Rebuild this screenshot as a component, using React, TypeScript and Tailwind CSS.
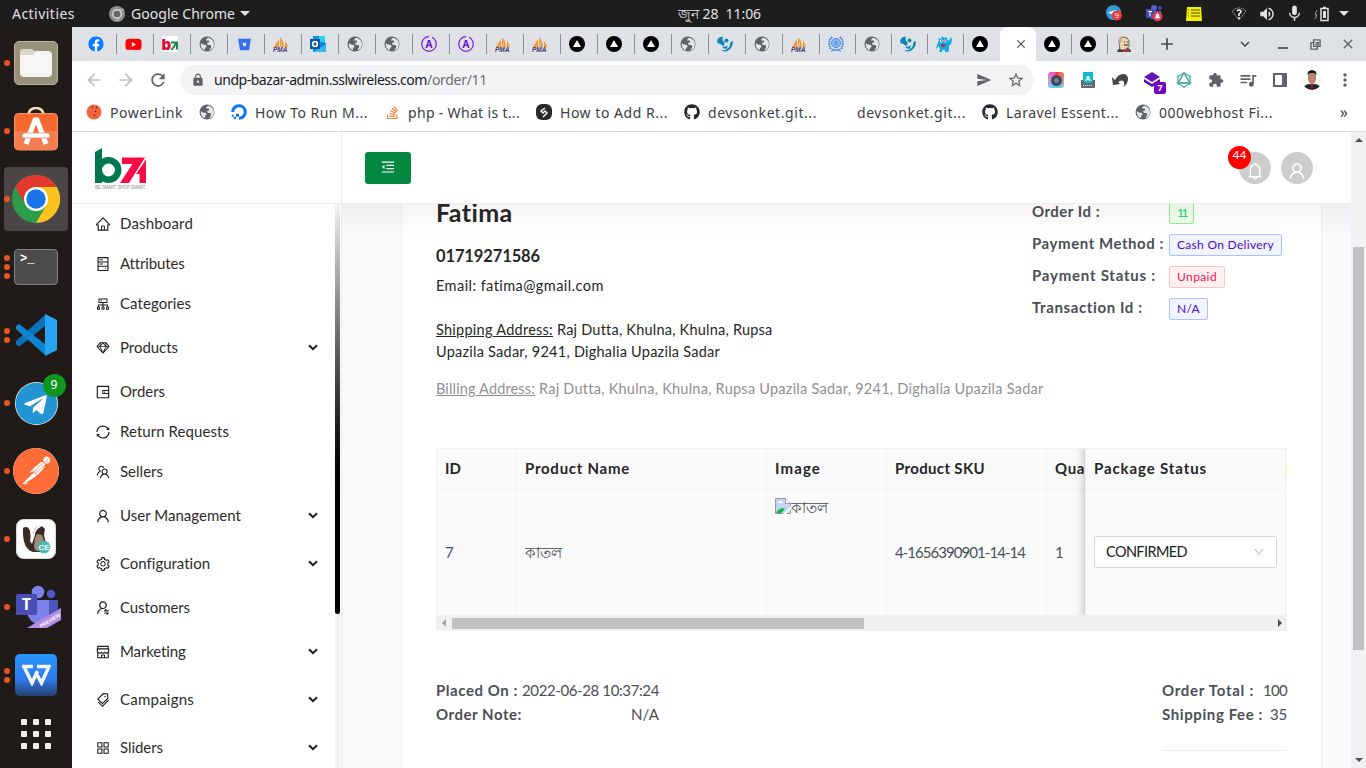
import { useLayoutEffect, useRef, useState, type ReactNode } from "react";
import {
  AiOutlineHome, AiOutlineHdd, AiOutlineCluster, AiOutlineSketch, AiOutlineWallet, AiOutlineSync, AiOutlineTeam,
  AiOutlineUser, AiOutlineSetting, AiOutlineUserSwitch, AiOutlineShop, AiOutlineTags, AiOutlineAppstore,
  AiOutlineMenuFold, AiOutlineBell, AiOutlineDown,
} from "react-icons/ai";
import { FaFacebook, FaYoutube, FaBitbucket, FaDigitalOcean, FaStackOverflow, FaGithub, FaTelegram } from "react-icons/fa";
import {
  MdArrowBack, MdArrowForward, MdRefresh, MdLock, MdSend, MdStarBorder, MdExtension, MdQueueMusic,
  MdMoreVert, MdClose, MdAdd, MdKeyboardArrowDown, MdVolumeUp, MdMic,
} from "react-icons/md";
import { SiPostman } from "react-icons/si";

/** Single-line text that spreads its letters over a given width. */
function Fit({ w, className = "", children }: { w: number; className?: string; children: string }) {
  const ref = useRef<HTMLSpanElement>(null);
  const [spacing, setSpacing] = useState(0);
  useLayoutEffect(() => {
    const el = ref.current;
    if (el) setSpacing((w - el.getBoundingClientRect().width) / children.length);
  }, [w, children]);
  return (
    <span ref={ref} className={`inline-block whitespace-pre ${className}`} style={{ letterSpacing: spacing }}>
      {children}
    </span>
  );
}

function Globe() {
  return (
    <svg viewBox="0 0 16 16" className="size-4">
      <circle cx="8" cy="8" r="7.500" fill="#5f6368" />
      <path d="M9.500 1.800q-2.500.7-2.500 2.700h3v2H8.500q-1 2 1 2.500l2.500.3v2.200l-2 2.700q5-1 5-6.200-.3-4-4.500-6z" fill="#e4e6ea" />
      <path d="M1.800 7 4 8.500l3 .5.500 2-1.500 1v2.300Q1.500 13 1.800 7z" fill="#e4e6ea" />
    </svg>
  );
}

function Pma() {
  return (
    <svg viewBox="0 0 16 16" className="size-4">
      <path d="M1 11 6 3v8zM7 11V1q4 4 4 10zM12 11V5q3 3 3 6z" fill="#f59a33" />
      <path d="M8 11V1l1 10z" fill="#c9c9c9" />
      <text x="0" y="16" fontSize="6.5" fontWeight="bold" fontStyle="italic" fill="#41386f" fontFamily="Liberation Sans">PMA</text>
    </svg>
  );
}

function Triangle() {
  return (
    <svg viewBox="0 0 16 16" className="size-4">
      <circle cx="8" cy="8" r="8" />
      <path d="m8 4 4 7H4z" fill="#fff" />
    </svg>
  );
}

function CircleA() {
  return (
    <svg viewBox="0 0 16 16" className="size-4">
      <circle cx="8" cy="8" r="7.3" fill="none" stroke="#7a1fd0" strokeWidth="1.2" strokeDasharray="40 3" transform="rotate(-45 8 8)" />
      <text x="8" y="11.7" textAnchor="middle" fontSize="10" fontWeight="bold" fill="#6a12c8" fontFamily="Inter">A</text>
    </svg>
  );
}

function Swirl() {
  return (
    <svg viewBox="0 0 16 16" className="size-4">
      <path d="M6 .5C1 1-.5 4 .5 7q3 .5 5.500 3 2-1 1.500-3.500Q4.500 4 6 .5z" fill="#0b87b8" />
      <circle cx="9.500" cy="4.500" r="2" fill="#0b87b8" />
      <path d="M15.800 5q.5 7-5.300 10-3 1.200-6.500-.5 9 .5 9.500-8.500z" fill="#0b87b8" />
      <path d="M6 10.500q3 .5 5-1l-1.500 3.500-4-1z" fill="#0b87b8" />
    </svg>
  );
}

function Outlook() {
  return (
    <svg viewBox="0 0 16 16" className="size-4">
      <path d="M3 0h12v8H3z" fill="#1490df" />
      <path d="M9 0h6v6H9z" fill="#28d0f5" />
      <path d="M3 7h13v9H3z" fill="#1380d2" />
      <path d="m3 16 13-8v8z" fill="#35b8f1" />
      <path d="M0 3h10v10H0z" fill="#0a57a4" />
      <circle cx="5" cy="8" r="2.4" fill="none" stroke="#fff" strokeWidth="1.6" />
    </svg>
  );
}

function B71Small() {
  return (
    <svg viewBox="0 0 16 16" className="size-4">
      <path d="M0 0h16v16H0z" fill="#fff" />
      <text x="-.5" y="13.5" fontSize="15" fontWeight="900" fill="#dd0f35" fontFamily="Inter">b</text>
      <path d="M9 6.5h6v7M14.5 7l-5 7" fill="none" stroke="#0b8a43" strokeWidth="2" />
    </svg>
  );
}

function Un() {
  return (
    <svg viewBox="0 0 16 16" className="size-4" fill="none" stroke="#4a8fe0">
      <path d="M4 1Q-1 6 3 13M12 1q5 5 1 12" strokeWidth="2" strokeDasharray="1.800 .5" />
      <circle cx="8" cy="7" r="4.500" fill="#a5c9f3" />
      <path d="M8 2.500v9M3.500 7h9M5 4.500q3 3 6 0M5 9.500q3-3 6 0" strokeWidth=".8" />
      <path d="m3 15 9-2M13 15l-9-2" />
    </svg>
  );
}

function Monster() {
  return (
    <svg viewBox="0 0 16 16" className="size-4">
      <path d="M3 4 2 2l3 1 1-3 2 2 3-1v2l2 2 2-4 1 3-1 4-2 2v4l-1 2h-3v-2H6v2H3l1-3-1-3-3 3 1-4z" fill="#12a7df" />
      <circle cx="5.5" cy="5" r="1.5" fill="#fff" />
      <circle cx="9" cy="5" r="1.5" fill="#fff" />
      <circle cx="6" cy="5" r=".7" />
      <circle cx="9" cy="5" r=".7" />
      <path d="M5 8h5q-1 3-3 3t-2-3" fill="#c1272d" />
    </svg>
  );
}

function Jenkins() {
  return (
    <svg viewBox="0 0 16 16" className="size-4">
      <path d="M1 16q1-4 5-4h6q3 1 3 4z" fill="#3d424c" />
      <path d="M4 14 3 5q1-4 5-4 4 0 5 4v5q-2 4-5 4z" fill="#efd2ae" stroke="#3b2c25" strokeWidth=".7" />
      <path d="M3 9 2 5Q3 0 8 0 5 2 5 6z" fill="#b8aa98" />
      <path d="M8 6h1M11 6h1M8 9h4" stroke="#222" strokeWidth="1" />
      <path d="m7 13 3 1 3-1v3l-3-1-3 1z" fill="#d33833" />
    </svg>
  );
}

const favicons: Record<string, ReactNode> = {
  fb: <FaFacebook className="size-4 shrink-0 rounded-full bg-white text-[#0a7cff]" />,
  yt: <FaYoutube className="size-[17px] shrink-0 text-[#f00]" />,
  b71: <B71Small />,
  g: <Globe />,
  bit: <FaBitbucket className="size-[13px] text-[#2f6ff2]" />,
  pma: <Pma />,
  out: <Outlook />,
  a: <CircleA />,
  tri: <Triangle />,
  sw: <Swirl />,
  un: <Un />,
  mon: <Monster />,
  jen: <Jenkins />,
};

const wideTabs = ["fb", "yt", "b71", "g", "bit", "pma", "out", "g", "g", "a", "a", "pma", "pma", "tri", "tri", "tri", "g", "sw", "g", "pma"];
const narrowTabs = ["un", "g", "sw", "mon"];
const lastTabs = ["tri", "tri", "jen"];

function Tab({ icon, narrow = false }: { icon: string; narrow?: boolean }) {
  return (
    <div className={`flex h-[34px] shrink-0 items-center ${narrow ? "w-9" : "w-[37px]"}`}>
      <span className="ml-2 flex w-4 items-center justify-center">{favicons[icon]}</span>
      <span className="ml-auto h-5 w-px bg-[#8b8e93]" />
    </div>
  );
}

function TopBar() {
  return (
    <div className="flex h-[27px] w-full items-center bg-[#1d1d1d] text-[14px] text-[#e2e2e2]">
      <Fit w={63} className="ml-3">Activities</Fit>
      <svg viewBox="0 0 16 16" className="ml-[34px] size-4">
        <circle cx="8" cy="8" r="8" fill="#8d8d8d" />
        <circle cx="8" cy="8" r="4.2" fill="#666" stroke="#ddd" strokeWidth="1.4" />
        <path d="M8 4h7M11.5 10 8 15" stroke="#ccc" />
      </svg>
      <Fit w={104} className="ml-[6px]">Google Chrome</Fit>
      <span className="ml-[5px] border-x-[5px] border-t-[5px] border-x-transparent border-t-[#e2e2e2]" />
      <Fit w={83} className="ml-[428px]">জুন 28  11:06</Fit>
      <svg viewBox="0 0 18 18" className="ml-[345px] size-[17px]">
        <circle cx="8" cy="8" r="8" fill="#2f9bd8" />
        <path d="m2 8 9-3-2 6z" fill="#fff" />
        <circle cx="11.5" cy="11" r="5.3" fill="#ef3a3a" />
        <text x="11.5" y="14" textAnchor="middle" fontSize="8" fill="#fff" fontFamily="Open Sans">9</text>
      </svg>
      <svg viewBox="0 0 18 17" className="ml-[22px] h-[17px] w-[18px]">
        <circle cx="9" cy="3" r="3" fill="#5b60cc" />
        <circle cx="15" cy="3" r="2" fill="#4047a0" />
        <path d="M6 6h10v8H6z" fill="#5b60cc" />
        <path d="M1 4h8v9H1z" fill="#434bb0" />
        <path d="M3 6.500h4M5 6.500v5" stroke="#fff" />
        <circle cx="12.500" cy="11.500" r="5" fill="#dd3b55" />
        <path d="M10 13h5l-1-1v-2q-1.500-3-3 0v2zM12 14h1" fill="#fff" stroke="#fff" strokeWidth=".5" />
      </svg>
      <svg viewBox="0 0 16 14" className="ml-[23px] h-[14px] w-4">
        <path d="M1 0h14l1 14H0z" fill="#f6ed00" />
        <path d="M2 3h1M2 6h1M2 9h1M5 3h9M5 6h9M5 9h9" stroke="#514d00" />
      </svg>
      <svg viewBox="0 0 16 14" className="ml-[29px] h-[14px] w-4" fill="none" stroke="#a8a8a8">
        <path d="M8 13 1 4q7-6 14 0z" strokeDasharray="1.500 .6" />
        <path d="M6 4q2-2 4 0 0 2-2 3v2M8 10v2" stroke="#f5f5f5" strokeWidth="1.600" />
      </svg>
      <MdVolumeUp className="ml-[11px] size-[18px]" />
      <MdMic className="ml-[9px] size-[19px]" />
      <svg viewBox="0 0 16 16" className="ml-[9px] size-4" fill="none" stroke="#e2e2e2">
        <path d="M8 2.500h7v12H8zM10 1.500h3" strokeWidth="1.500" />
        <path d="M10 5h3v7h-3z" fill="#e2e2e2" stroke="none" />
        <path d="M4 4 2 9h2l-2 4" stroke="#999" />
      </svg>
      <span className="ml-[10px] border-x-[5px] border-t-[5px] border-x-transparent border-t-[#e2e2e2]" />
    </div>
  );
}

function ChromeLogo() {
  return (
    <svg viewBox="0 0 48 48" className="size-12">
      <circle cx="24" cy="24" r="24" fill="#2c9c4b" />
      <path d="M24 12h20.800A24 24 0 0 1 24 48l10.400-18z" fill="#fcc31e" />
      <path d="M3.200 12a24 24 0 0 1 41.600 0H24L13.600 30z" fill="#e23a2e" />
      <circle cx="24" cy="24" r="12" fill="#fff" />
      <circle cx="24" cy="24" r="9.700" fill="#1b73e8" />
    </svg>
  );
}

function DockItem({ dots, active = false, children }: { dots: number; active?: boolean; children: ReactNode }) {
  return (
    <div className="flex h-[68px] w-full shrink-0 items-center">
      <div className="relative z-10 flex w-1 flex-col items-center gap-[3px]">
        {Array.from({ length: dots }, (_, i) => (
          <span key={i} className="ml-[10px] size-[6px] rounded-full bg-[#e95420]" />
        ))}
      </div>
      <div className={`flex size-16 items-center justify-center rounded ${active ? "bg-[#4b4645]" : ""}`}>{children}</div>
    </div>
  );
}

function Dock() {
  return (
    <div className="flex h-full w-[72px] shrink-0 flex-col overflow-hidden bg-[#201b18] pt-[2px]">
      <DockItem dots={1}>
        <div className="flex size-11 items-center justify-center rounded-[5px] border border-[#b9b4a3] bg-[#989079]">
          <svg viewBox="0 0 34 30" className="h-[30px] w-[34px]">
            <path d="M1 4q0-3 3-3h9l4 3h12q4 0 4 4H1z" fill="#d9d5ca" />
            <path d="M1 7h13l3-4h12q4 0 4 4v18q0 4-4 4H5q-4 0-4-4z" fill="#f7f6f5" />
          </svg>
        </div>
      </DockItem>
      <DockItem dots={1}>
        <svg viewBox="0 0 44 44" className="mb-1 size-11">
          <path d="M14 9q1-8 8-8t8 8" fill="none" stroke="#efdfb3" strokeWidth="2.500" />
          <rect x=".5" y="6.500" width="43" height="36.500" rx="4" fill="#f4682f" stroke="#f89872" />
          <path d="M1 24h42v15q0 4-4 4H5q-4 0-4-4z" fill="#f57e50" />
          <path d="M12 37 21 13h2l9 24" fill="none" stroke="#fff" strokeWidth="5" />
          <rect x="8" y="26" width="28" height="5" rx="2" fill="#fff" stroke="#d97855" strokeWidth=".6" />
        </svg>
      </DockItem>
      <DockItem dots={1} active><ChromeLogo /></DockItem>
      <DockItem dots={3}>
        <div className="h-9 w-11 rounded-[4px] border border-[#808080] bg-[#4c4c4c] px-[5px] pt-[2px] font-[Liberation_Mono] text-[12px] font-bold leading-[14px] text-white">
          <span>&gt;_</span>
        </div>
      </DockItem>
      <DockItem dots={2}>
        <svg viewBox="0 0 42 42" className="size-[42px]">
          <path d="M1 27 30 1v11L5 32q-2 1-4-2z" fill="#0b72ba" />
          <path d="M1 15q-1-3 3-5l26 20v11L1 15z" fill="#0f85d4" />
          <path d="M30 0 42 6v30l-12 6z" fill="#26a5f3" />
        </svg>
      </DockItem>
      <DockItem dots={1}>
        <div className="relative flex size-[43px] items-center justify-center">
          <FaTelegram className="size-[43px] rounded-full bg-white text-[#2295d2]" />
          <span className="absolute -right-2 -top-2 flex size-[23px] items-center justify-center rounded-full bg-[#0e9621] text-[12px] text-white">9</span>
        </div>
      </DockItem>
      <DockItem dots={1}>
        <div className="size-[46px] overflow-hidden rounded-full bg-white">
          <SiPostman className="size-[46px] text-[#ff6c37]" />
        </div>
      </DockItem>
      <DockItem dots={1}>
        <svg viewBox="0 0 40 40" className="size-10">
          <rect x=".5" y=".5" width="39" height="39" rx="7" fill="#fff" stroke="#d8d8d8" />
          <path d="M7 9q5-3 7 3 1 6 0 10l2 3 3-9q0-4 4-7l3-2 3 3-1 6 2 9-4 8H17Q6 30 7 9z" fill="#3c2a23" />
          <path d="m19 19 2-4 5 1 3 9-3 7h-6l-2-4z" fill="#a08a78" />
          <path d="m17 14 4-7" stroke="#cfc6bd" />
          <circle cx="28" cy="28" r="6.300" fill="#4bb6b8" />
          <text x="28" y="31" textAnchor="middle" fontSize="8" fontWeight="bold" fill="#e9ffff" fontFamily="Liberation Sans">CE</text>
        </svg>
      </DockItem>
      <DockItem dots={1}>
        <svg viewBox="0 0 46 44" className="ml-[3px] h-11 w-[46px]">
          <circle cx="23" cy="7" r="6.300" fill="#7b83eb" />
          <circle cx="36" cy="9" r="4.200" fill="#5059c9" />
          <path d="M34 15h9v16q-2 5-9 5z" fill="#4b53bc" />
          <path d="M12 15h22v18q-3 6-10 6t-11-8z" fill="#7b83eb" />
          <rect x="1" y="9" width="21" height="21" rx="1.500" fill="#484eb4" />
          <text x="11.500" y="25" textAnchor="middle" fontSize="16" fontWeight="bold" fill="#fff" fontFamily="Open Sans">T</text>
          <path d="m12 43 34-20v12l-14 8z" fill="#b58ee3" />
          <text x="26" y="43" fontSize="5" fontWeight="bold" fill="#fff" fontFamily="Liberation Sans" transform="rotate(-31 26 43)">PREVIEW</text>
        </svg>
      </DockItem>
      <DockItem dots={2}>
        <div className="flex size-[42px] items-center justify-center rounded-[5px] bg-linear-to-b from-[#2795ff] via-[#2d79ee] via-60% to-[#243f70]">
          <svg viewBox="0 0 30 22" className="h-[22px] w-[30px]" fill="none" stroke="#f4f4f4" strokeWidth="3.500">
            <path d="M1 2.500h11M16 2.500h12L20.500 19 15 9M3 2.500 11 19l5.500-12" />
          </svg>
        </div>
      </DockItem>
      <div className="ml-[21px] mt-[10px] grid w-[30px] grid-cols-3 gap-[6px]">
        {Array.from({ length: 9 }, (_, i) => <span key={i} className="size-[6px] rounded-[1px] bg-[#f1f0ee]" />)}
      </div>
    </div>
  );
}

function TabStrip() {
  return (
    <div className="flex h-[34px] w-full bg-[#dee1e6] pl-2">
      {wideTabs.map((t, i) => <Tab key={i} icon={t} />)}
      {narrowTabs.map((t, i) => <Tab key={i} icon={t} narrow />)}
      <div className="flex w-9 items-center pl-2"><Triangle /></div>
      <div className="flex w-9 items-center justify-center rounded-t-lg bg-white pl-[6px]"><MdClose className="size-[14px] text-[#45494d]" /></div>
      {lastTabs.map((t, i) => <Tab key={i} icon={t} narrow />)}
      <div className="flex items-center text-[#45494d]">
        <MdAdd className="ml-[13px] size-[20px]" />
        <MdKeyboardArrowDown className="ml-[59px] size-[18px]" />
        <span className="ml-6 mt-2 h-[2px] w-[10px] bg-[#5f6368]" />
        <svg viewBox="0 0 12 12" className="ml-[22px] size-[11px]" fill="none" stroke="#5f6368" strokeWidth="1.500">
          <path d="M4 1h7v7H4zM4 4H1v7h7V8M6 4h3v2H6" />
        </svg>
        <MdClose className="ml-[19px] size-4 text-[#5f6368]" />
      </div>
    </div>
  );
}

function Toolbar() {
  return (
    <div className="flex h-[38px] w-full items-center bg-white text-[#5f6368]">
      <MdArrowBack className="ml-3 size-5 text-[#bdc0c3]" />
      <MdArrowForward className="ml-3 size-5 text-[#bdc0c3]" />
      <MdRefresh className="ml-3 size-5" />
      <div className="ml-3 flex h-[30px] w-[854px] items-center rounded-full bg-[#f1f3f4] text-[14px]">
        <MdLock className="ml-[11px] size-[14px]" />
        <Fit w={213} className="ml-[9px] pb-px text-[#202124]">undp-bazar-admin.sslwireless.com</Fit>
        <Fit w={60} className="pb-px text-[#6b6f73]">/order/11</Fit>
        <MdSend className="ml-auto size-4" />
        <MdStarBorder className="ml-[15px] mr-[9px] size-[18px]" />
      </div>
      <div className="ml-[14px] flex size-4 items-center justify-center rounded-[3px] bg-conic from-[#ff2d20] via-[#16d7ff] to-[#ff2db5]">
        <span className="size-[11px] rounded-full border-[3px] border-[#3d4654] bg-[#698292]" />
      </div>
      <svg viewBox="0 0 16 16" className="ml-4 size-4">
        <path d="M1 8h14v7q0 1-1 1H2q-1 0-1-1z" fill="#666b6e" />
        <path d="M3 0h10v9l-2 2H5L3 9z" fill="#11bcd0" />
        <text x="8" y="8.500" textAnchor="middle" fontSize="8" fontWeight="bold" fill="#fff" fontFamily="Liberation Sans">A</text>
        <path d="M3 13.500h10" stroke="#eee" strokeDasharray="1 1" />
      </svg>
      <svg viewBox="0 0 16 16" className="ml-4 size-4">
        <path d="m0 5 1 8 7-1-2-2q4-3 6 0 1 3-1 5 5-3 5-8 0-5-5-5-5 0-8 6z" fill="#474747" />
      </svg>
      <div className="relative ml-4 size-4">
        <svg viewBox="0 0 16 16" className="size-4"><path d="m8 0 8 5-8 5-8-5z" fill="#6a14bd" /><path d="m0 7 8 5 8-5v3l-8 5-8-5z" fill="#5b0fae" /></svg>
        <span className="absolute left-[10px] top-[10px] flex size-3 items-center justify-center rounded-[2px] bg-[#7606bd] text-[9px] font-bold text-white">7</span>
      </div>
      <svg viewBox="0 0 16 16" className="ml-4 size-4" fill="none">
        <path d="m8 1 6 3.500v7L8 15l-6-3.500v-7z" stroke="#43b9a2" strokeWidth="1.300" />
        <path d="m8 1 6 10H2z" stroke="#2b87c9" strokeWidth="1.300" />
        <path d="M8 0v2M1 4.500h2M13 4.500h2M1 11.500h2M13 11.500h2M8 14v2" stroke="#59cf55" strokeWidth="2" />
      </svg>
      <MdExtension className="ml-4 size-4" />
      <MdQueueMusic className="ml-[14px] size-[20px]" />
      <svg viewBox="0 0 14 14" className="ml-[15px] size-[14px]"><path d="M1 1h12v12H1z" fill="none" stroke="#5f6368" strokeWidth="2" /><path d="M9 1h4v12H9z" fill="#5f6368" /></svg>
      <svg viewBox="0 0 20 20" className="ml-[15px] size-5 rounded-full">
        <path d="M0 0h20v20H0z" fill="#f3f8fa" />
        <path d="M1 20q0-5 6-6h6q6 1 6 6z" fill="#26222c" />
        <path d="m8 14 2 6 2-6z" fill="#981c3b" />
        <path d="M6 5q0-4 4-4t4 4v4q-1 5-4 5T6 9z" fill="#b9846e" />
        <path d="M5.500 5q0-5 4.500-5t4.500 5l-2-2h-5z" fill="#171313" />
      </svg>
      <MdMoreVert className="ml-[13px] size-5" />
    </div>
  );
}

function Mark({ w, gap, icon, children }: { w: number; gap: string; icon?: ReactNode; children?: string }) {
  return (
    <div className={`flex shrink-0 items-center ${gap}`}>
      <span className="flex w-4 items-center justify-center">{icon}</span>
      {children && <Fit w={w} className="ml-2">{children}</Fit>}
    </div>
  );
}

function Bookmarks() {
  return (
    <div className="flex h-[33px] w-full items-center border-b border-[#dadce0] bg-white pb-[6px] text-[14px] text-[#3c4043]">
      <Mark w={73} gap="ml-[14px]" icon={<svg viewBox="0 0 16 16" className="size-4"><circle cx="8" cy="8" r="7.500" fill="#f2653a" /><path d="m6 3 1 1m3-1 1 1M9 7l1 1m-1 3-1 1" stroke="#4a2030" strokeWidth="1.200" /></svg>}>PowerLink</Mark>
      <Mark w={0} gap="ml-4" icon={<Globe />} />
      <Mark w={113} gap="ml-4" icon={<FaDigitalOcean className="size-4 shrink-0 text-[#0972ff]" />}>How To Run M...</Mark>
      <Mark w={112} gap="ml-4" icon={<FaStackOverflow className="size-[15px] text-[#f08032]" />}>php - What is t...</Mark>
      <Mark w={108} gap="ml-4" icon={<svg viewBox="0 0 16 16" className="size-4"><rect width="16" height="16" rx="6" fill="#2b2b2b" /><path d="m9 4-4 3 2 2 2-2 2 2-4 4" fill="none" stroke="#fff" strokeWidth="1.400" /></svg>}>How to Add R...</Mark>
      <Mark w={109} gap="ml-4" icon={<FaGithub className="size-4 text-[#24292f]" />}>devsonket.git...</Mark>
      <Mark w={109} gap="ml-4">devsonket.git...</Mark>
      <Mark w={113} gap="ml-4" icon={<FaGithub className="size-4 text-[#24292f]" />}>Laravel Essent...</Mark>
      <Mark w={114} gap="ml-4" icon={<Globe />}>000webhost Fi...</Mark>
      <span className="ml-auto mr-[18px] text-[16px]">»</span>
    </div>
  );
}

const menu: [string, number, typeof AiOutlineHome, boolean][] = [
  ["Dashboard", 73, AiOutlineHome, false],
  ["Attributes", 64, AiOutlineHdd, false],
  ["Categories", 71, AiOutlineCluster, false],
  ["Products", 58, AiOutlineSketch, true],
  ["Orders", 45, AiOutlineWallet, false],
  ["Return Requests", 109, AiOutlineSync, false],
  ["Sellers", 43, AiOutlineTeam, false],
  ["User Management", 121, AiOutlineUser, true],
  ["Configuration", 90, AiOutlineSetting, true],
  ["Customers", 70, AiOutlineUserSwitch, false],
  ["Marketing", 66, AiOutlineShop, true],
  ["Campaigns", 74, AiOutlineTags, true],
  ["Sliders", 43, AiOutlineAppstore, true],
];

function Sidebar() {
  return (
    <div className="flex h-full w-[270px] shrink-0 flex-col overflow-hidden border-r border-[#ececee] bg-white">
      <div className="flex h-[72px] shrink-0 items-start border-b border-[#ededed] pl-[23px] pt-[16px]">
        <svg viewBox="0 0 52 41" className="h-[41px] w-[52px]">
          <circle cx="13.500" cy="22" r="9.700" fill="none" stroke="#00784f" strokeWidth="6.500" />
          <path d="M0 4 7 0v35H0z" fill="#00784f" />
          <path d="M27 9.500h23L34 35h-9l12.500-19H27z" fill="#fb0a43" />
          <path d="M51 11.500V35h-6.500V26H41z" fill="#fb0a43" />
          <text x="0" y="40.500" fontSize="4.500" textLength="51" fill="#8d8d8d" fontFamily="Liberation Sans">BE SMART. SHOP SMART.</text>
        </svg>
      </div>
      <div className="flex min-h-0 flex-1">
        <div className="-mt-px flex flex-1 flex-col overflow-hidden">
          {menu.map(([label, w, Icon, sub]) => (
            <div key={label} className={`flex shrink-0 items-center pl-[23px] pr-[17px] text-[15px] text-[#2c2c2c] ${sub ? "h-12" : "h-10"}`}>
              <Icon className="mr-[9px] mt-px size-4 shrink-0 text-[#1c1c1c]" />
              <Fit w={w}>{label}</Fit>
              {sub && (
                <svg viewBox="0 0 10 7" className="ml-auto h-[7px] w-[10px]"><path d="m1 1.200 4 4 4-4" fill="none" stroke="#1d1d1d" strokeWidth="2" /></svg>
              )}
            </div>
          ))}
        </div>
        <div className="mr-px w-[5px] bg-[#f3f3f3]">
          <div className="h-[410px] rounded-b-full bg-linear-to-b from-[#f3f3f3] to-black to-72%" />
        </div>
      </div>
    </div>
  );
}

function Header() {
  return (
    <div className="flex h-[72px] w-full shrink-0 items-center border-b border-[#ededed] bg-white pl-[23px]">
      <div className="flex h-8 w-[46px] items-center justify-center rounded-[3px] bg-[#04883f]"><AiOutlineMenuFold className="mb-[2px] size-4 text-white" /></div>
      <div className="relative ml-auto mr-[10px] flex size-8 items-center justify-center rounded-full bg-[#ccc]">
        <AiOutlineBell className="mt-[7px] size-5 text-white" />
        <span className="absolute -left-[11px] -top-[6px] flex size-[23px] items-center justify-center rounded-full bg-[#f00] pb-[5px] text-[12px] text-white">44</span>
      </div>
      <div className="mr-[38px] flex size-8 items-center justify-center rounded-full bg-[#ccc]"><AiOutlineUser className="mt-[6px] size-5 text-white" /></div>
    </div>
  );
}

const info: [string, number, string, number, string, string][] = [
  ["Order Id :", 68, "11", 9, "w-[25px]", "border-[#95f08a] bg-[#f1fdef] text-[#00d95f]"],
  ["Payment Method :", 132, "Cash On Delivery", 97, "w-[113px]", "border-[#adc0ff] bg-[#f0f4ff] text-[#5208cf]"],
  ["Payment Status :", 124, "Unpaid", 40, "w-[56px]", "border-[#ffc2c2] bg-[#fff1f0] text-[#f90f52]"],
  ["Transaction Id :", 111, "N/A", 23, "w-[39px]", "border-[#adc0ff] bg-[#f0f4ff] text-[#5208cf]"],
];

function Summary() {
  return (
    <div className="flex">
      <div className="w-[596px] text-[#262626]">
        <Fit w={77} className="-mt-[7px] block! w-fit text-[25px] font-bold leading-[30px]">Fatima</Fit>
        <Fit w={104} className="mt-[17px] block! w-fit text-[16.500px] font-bold leading-[24px]">01719271586</Fit>
        <Fit w={168} className="mt-[7px] block! w-fit text-[14.500px] leading-[22px]">Email: fatima@gmail.com</Fit>
        <div className="mt-[22px] w-[360px] text-[14.500px] leading-[22px]">
          <Fit w={117} className="underline">Shipping Address:</Fit>
          <Fit w={219}> Raj Dutta, Khulna, Khulna, Rupsa</Fit>
          <Fit w={284}>Upazila Sadar, 9241, Dighalia Upazila Sadar</Fit>
        </div>
        <div className="mt-[15px] w-[620px] text-[14.500px] leading-[22px] text-[#8f8f8f]">
          <Fit w={99} className="underline">Billing Address:</Fit>
          <Fit w={508}> Raj Dutta, Khulna, Khulna, Rupsa Upazila Sadar, 9241, Dighalia Upazila Sadar</Fit>
        </div>
      </div>
      <div className="-mt-[2px] flex flex-col gap-[10px]">
        {info.map(([label, w, value, vw, box, tone]) => (
          <div key={label} className="flex h-[22px] items-center">
            <div className="w-[137px]"><Fit w={w} className="pb-[4px] text-[15px] font-bold text-[#4a4f56]">{label}</Fit></div>
            <span className={`flex h-[22px] items-center justify-center rounded-[2px] border text-[12px] ${box} ${tone}`}><Fit w={vw}>{value}</Fit></span>
          </div>
        ))}
      </div>
    </div>
  );
}

function Column({ box, head, body }: { box: string; head: ReactNode; body: ReactNode }) {
  return (
    <div className={`flex h-full shrink-0 flex-col overflow-hidden border-r border-[#f0f0f0] ${box}`}>
      <div className="flex h-[41px] shrink-0 items-center overflow-hidden border-b border-[#f0f0f0] px-2 pb-[2px] font-bold text-[#262626]">{head}</div>
      <div className="flex flex-1 items-center px-2 text-[#4a4f56]">{body}</div>
    </div>
  );
}

function OrderTable() {
  return (
    <div className="w-[851px] text-[15px]">
      <div className="flex h-[167px] border-l border-t border-[#f0f0f0] bg-[#fafafa]">
        <Column box="w-20" head={<Fit w={16}>ID</Fit>} body={<Fit w={9}>7</Fit>} />
        <Column box="w-[250px]" head={<Fit w={105}>Product Name</Fit>} body={<Fit w={36} className="text-[14.500px]">কাতল</Fit>} />
        <Column
          box="w-[120px]"
          head={<Fit w={46}>Image</Fit>}
          body={
            <div className="flex h-full items-start pt-2">
              <svg viewBox="0 0 16 16" className="size-4">
                <path d="M.5.500h10l5 5v10H.5z" fill="#c4d4f8" stroke="#9a9a9a" />
                <path d="M10.500.500v5h5" fill="#fff" stroke="#9a9a9a" />
                <path d="M3 5q0-2 2-2 2-1 3 2z" fill="#fff" />
                <path d="M1 15q5-7 9-4l-4 4z" fill="#0bc040" />
                <path d="M16 8 8 16h3l5-5z" fill="#fff" />
              </svg>
              <Fit w={36} className="-mt-px text-[14.500px]">কাতল</Fit>
            </div>
          }
        />
        <Column box="w-40" head={<Fit w={90}>Product SKU</Fit>} body={<Fit w={130}>4-1656390901-14-14</Fit>} />
        <div className="relative w-[38px] overflow-hidden">
          <Column box="w-[38px]" head={<Fit w={30}>Qua</Fit>} body={<Fit w={6}>1</Fit>} />
          <span className="absolute inset-y-0 right-0 w-[9px] bg-linear-to-r from-transparent to-black/12" />
        </div>
        <Column
          box="w-[201px] border-l"
          head={<Fit w={113}>Package Status</Fit>}
          body={
            <div className="mb-[2px] flex h-8 w-[183px] items-center justify-between rounded-[2px] border border-[#d9d9d9] bg-white px-[11px] text-[#202020]">
              <Fit w={81} className="text-[14.500px]">CONFIRMED</Fit>
              <AiOutlineDown className="size-3 text-[#bfbfbf]" />
            </div>
          }
        />
        <div className="w-px bg-[#fafafa] pt-4"><div className="h-[9px] bg-[#fdfaa0]" /></div>
      </div>
      <div className="flex h-4 items-center bg-[#f0f0f0]">
        <span className="ml-[6px] border-y-[4px] border-r-[4px] border-y-transparent border-r-[#a3a3a3]" />
        <span className="ml-[6px] h-[11px] w-[412px] bg-[#c1c1c1]" />
        <span className="ml-auto mr-[5px] border-y-[4px] border-l-[4px] border-y-transparent border-l-[#4a4a4a]" />
      </div>
    </div>
  );
}

function Totals() {
  return (
    <div className="mt-[47px] flex w-[851px] justify-between text-[15px] leading-6 text-[#4a4f56]">
      <div className="w-[223px]">
        <div className="flex justify-between"><Fit w={82} className="font-bold">Placed On :</Fit><Fit w={137}>2022-06-28 10:37:24</Fit></div>
        <div className="flex justify-between"><Fit w={86} className="font-bold">Order Note:</Fit><Fit w={28}>N/A</Fit></div>
      </div>
      <div className="w-[125px]">
        <div className="flex justify-between"><Fit w={92} className="font-bold">Order Total :</Fit><Fit w={24}>100</Fit></div>
        <div className="flex justify-between"><Fit w={101} className="font-bold">Shipping Fee :</Fit><Fit w={17}>35</Fit></div>
        <div className="mt-6 h-px bg-[#ececec]" />
      </div>
    </div>
  );
}

function Page() {
  return (
    <div className="flex min-h-0 flex-1 font-[Lato,'Noto_Sans',sans-serif]">
      <Sidebar />
      <div className="flex min-w-0 flex-1 flex-col">
        <Header />
        <div className="relative flex min-h-0 flex-1 bg-[#f8f9fb] pl-[59px]">
          <div className="h-full w-[921px] shrink-0 overflow-hidden border-x border-[#eee] bg-white pl-[34px]">
            <div className="h-[244px]"><Summary /></div>
            <OrderTable />
            <Totals />
          </div>
          <div className="absolute inset-x-0 top-0 h-8 bg-linear-to-b from-black/4 to-transparent" />
        </div>
      </div>
      <div className="flex w-[15px] shrink-0 flex-col items-center bg-[#f1f1f1]">
        <span className="mt-[6px] border-x-[4px] border-b-[4px] border-x-transparent border-b-[#505050]" />
        <span className="mt-[105px] h-[403px] w-[11px] bg-[#c1c1c1]" />
        <span className="mb-[6px] mt-auto border-x-[4px] border-t-[4px] border-x-transparent border-t-[#505050]" />
      </div>
    </div>
  );
}

export default function App() {
  return (
    <div className="flex h-[768px] w-[1366px] flex-col overflow-hidden bg-white font-['Noto_Sans',sans-serif]">
      <TopBar />
      <div className="flex min-h-0 flex-1">
        <Dock />
        <div className="flex min-w-0 flex-1 flex-col">
          <TabStrip />
          <Toolbar />
          <Bookmarks />
          <Page />
        </div>
      </div>
    </div>
  );
}
